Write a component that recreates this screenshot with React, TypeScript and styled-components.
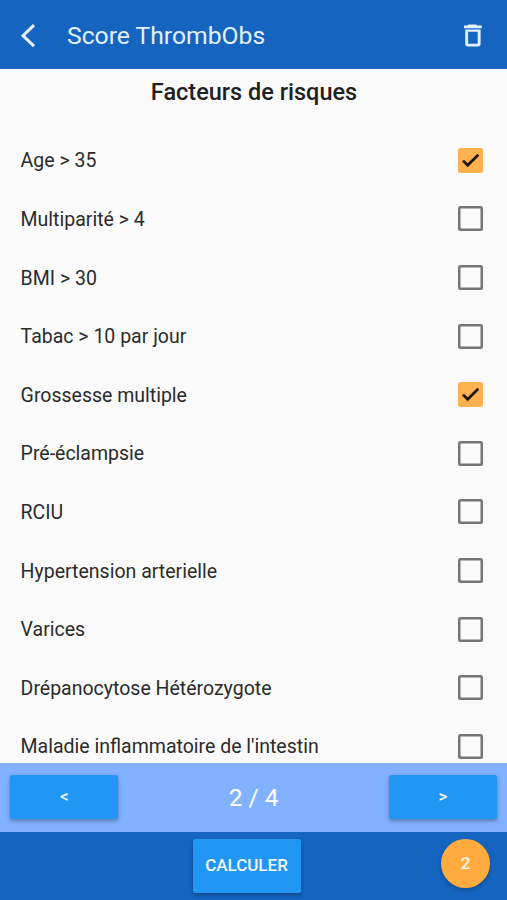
import React from "react";
import styled, { createGlobalStyle } from "styled-components";

const GlobalStyle = createGlobalStyle`
  * { box-sizing: border-box; }
  body { margin: 0; background: #fafafa; font-family: Roboto, sans-serif; color: #212121; }
  button { font: inherit; border: 0; padding: 0; cursor: pointer; }
`;
const Screen = styled.div`
  display: flex;
  flex-direction: column;
  height: 900px;
  overflow: hidden;
`;
const AppBar = styled.header`
  display: flex;
  align-items: center;
  flex: 0 0 69px;
  padding: 2px 19px 0 16px;
  background: #1565c0;
  color: #e3f0fd;
`;
const IconButton = styled.button`
  display: flex;
  background: transparent;
  color: inherit;
`;
const Title = styled.h1`
  flex: 1;
  margin: 0 0 0 27px;
  font-size: 24.7px;
  font-weight: 400;
  line-height: 30px;
`;
const Content = styled.main`
  flex: 1;
  min-height: 0;
  overflow: hidden;
`;
const Heading = styled.h2`
  margin: 0 0 24px;
  padding: 8px 0 0 1px;
  font-size: 23.5px;
  font-weight: 500;
  line-height: 30px;
  text-align: center;
`;
const Row = styled.label`
  display: flex;
  align-items: center;
  justify-content: space-between;
  height: 58.6px;
  padding: 0 24.5px 0 20.6px;
  font-size: 19.5px;
  color: #2b2b2b;
`;
const Label = styled.span`
  padding-top: 1.4px;
`;
const Box = styled.span<{ $checked: boolean }>`
  display: flex;
  width: 25px;
  height: 25px;
  border-radius: 2.5px;
  background: ${(p) => (p.$checked ? "#ffb14f" : "transparent")};
  box-shadow: ${(p) => (p.$checked ? "none" : "inset 0 0 0 2.5px #757575")};
`;
const Pager = styled.nav`
  display: flex;
  align-items: center;
  justify-content: space-between;
  flex: 0 0 68.5px;
  padding: 0 10px 0 10.4px;
  background: #82b1ff;
`;
const ActionButton = styled.button<{ $height: number }>`
  width: 108px;
  height: ${(p) => p.$height}px;
  padding-bottom: 2px;
  border-radius: 2.5px;
  background: #2196f3;
  color: #f4faff;
  font-size: 17px;
  font-weight: 500;
  box-shadow: 0 2px 4px rgba(0, 0, 0, 0.32);
`;
const PageCount = styled.span`
  color: #fff;
  font-size: 24.6px;
`;
const Footer = styled.footer`
  display: grid;
  grid-template-columns: 1fr 108px 1fr;
  align-items: start;
  flex: 0 0 68.5px;
  padding: 7px 17px 0 3px;
  background: #1565c0;
`;
const Score = styled.div`
  display: grid;
  place-items: center;
  justify-self: end;
  width: 49px;
  height: 49px;
  padding-bottom: 1px;
  border-radius: 50%;
  background: #ffab40;
  color: #fff8ee;
  font-size: 17px;
  font-weight: 500;
  box-shadow: 0 2px 4px rgba(0, 0, 0, 0.25);
`;

const factors = [
  ["Age > 35", true],
  ["Multiparité > 4", false],
  ["BMI > 30", false],
  ["Tabac > 10 par jour", false],
  ["Grossesse multiple", true],
  ["Pré-éclampsie", false],
  ["RCIU", false],
  ["Hypertension arterielle", false],
  ["Varices", false],
  ["Drépanocytose Hétérozygote", false],
  ["Maladie inflammatoire de l'intestin", false],
] as [string, boolean][];

export default function App() {
  return (
    <Screen>
      <GlobalStyle />
      <AppBar>
        <IconButton aria-label="Retour">
          <svg width="24" height="28" viewBox="0 0 24 28" fill="none" stroke="currentColor" strokeWidth="3">
            <path d="M18 3.2 7 13.7l11 10.5" />
          </svg>
        </IconButton>
        <Title>Score ThrombObs</Title>
        <IconButton aria-label="Supprimer">
          <svg width="30" height="30" viewBox="0 0 30 30" fill="currentColor">
            <path d="M10.2 3.4h8l1 1.2h4.6v2.6H6V4.6h3.2zM7.2 8.4h15.4v14.4c0 1.7-1 2.7-2.7 2.7h-10c-1.7 0-2.7-1-2.7-2.7zm2.9 2.3v12.1h9.6V10.7z" fillRule="evenodd" />
          </svg>
        </IconButton>
      </AppBar>
      <Content>
        <Heading>Facteurs de risques</Heading>
        {factors.map(([label, checked]) => (
          <Row key={label}>
            <Label>{label}</Label>
            <Box $checked={checked} role="checkbox" aria-checked={checked}>
              {checked && (
                <svg width="25" height="25" viewBox="0 0 25 25" fill="none" stroke="#1c1408" strokeWidth="2.7">
                  <path d="m5 12.6 4.7 4.7L20.3 6.8" />
                </svg>
              )}
            </Box>
          </Row>
        ))}
      </Content>
      <Pager>
        <ActionButton $height={44}>&lt;</ActionButton>
        <PageCount>2 / 4</PageCount>
        <ActionButton $height={44}>&gt;</ActionButton>
      </Pager>
      <Footer>
        <span />
        <ActionButton $height={54}>CALCULER</ActionButton>
        <Score>2</Score>
      </Footer>
    </Screen>
  );
}
